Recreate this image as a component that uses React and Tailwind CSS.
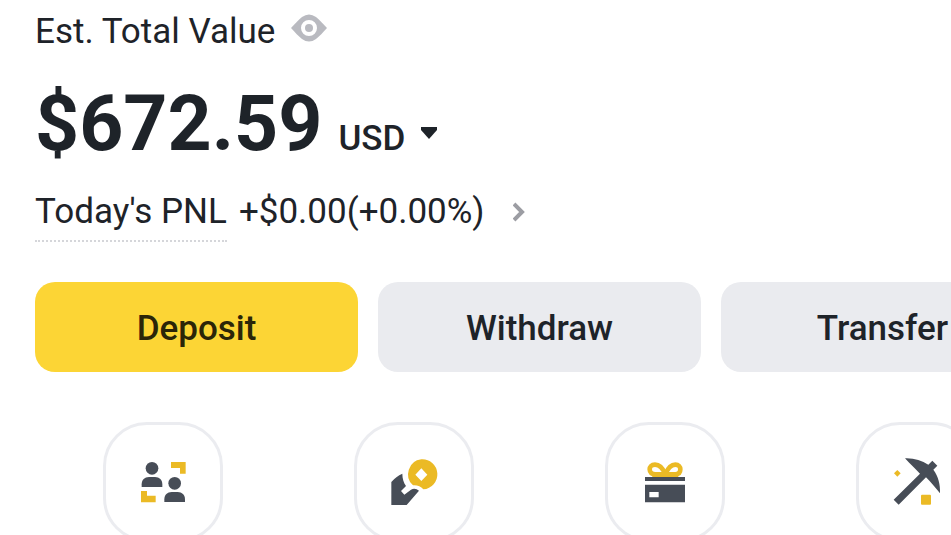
import React, { useState } from 'react';

const P2PIcon = () => (
  <svg viewBox="113 112 180 180" className="w-[60px] h-[60px]" aria-hidden="true">
    <g fill="#474d57">
      <circle cx="170" cy="161" r="19" />
      <path d="M139 217v-8c0-13 9-22 22-22h18c13 0 22 9 22 22v8z" />
      <circle cx="238" cy="206" r="19" />
      <path d="M207 262v-8c0-13 9-22 22-22h18c13 0 22 9 22 22v8z" />
    </g>
    <path fill="#ebba25" d="M227 142h44v35h-17v-17h-27zM137 229h18v14h26v20h-44z" />
  </svg>
);

const EarnIcon = () => (
  <svg viewBox="117 112 180 180" className="w-[60px] h-[60px]" aria-hidden="true">
    <path fill="#474d57" d="M139 202q14-17 33-25c0 14 4 27 11 37l-15 15 10 11 20-15c8-5 17-3 24 3l-37 43h-46z" />
    <path fill="#ebba25" fillRule="evenodd" d="M229 134a45 45 0 0 1 6 90c-8-9-18-13-31-12a45 45 0 0 1 25-78zM229 161l-18 19 18 19 18-19z" />
  </svg>
);

const GiftCardIcon = () => (
  <svg viewBox="120 112 180 180" className="w-[60px] h-[60px]" aria-hidden="true">
    <path
      fill="none"
      stroke="#ebba25"
      strokeWidth="14"
      strokeLinejoin="round"
      d="M211 179c-7-17-18-29-31-29-11 0-16 7-16 14 0 10 7 15 17 15h60c10 0 15-6 15-15 0-7-5-14-15-14-13 0-23 12-30 29z"
    />
    <path fill="#ebba25" d="M172 173h78v14h-78z" />
    <path fill="#474d57" fillRule="evenodd" d="M150 187h120v12H150zM150 210h120v53H150zM163 232v16h28v-16z" />
  </svg>
);

const MiningIcon = () => (
  <svg viewBox="123 112 180 180" className="w-[60px] h-[60px]" aria-hidden="true">
    <path fill="#474d57" d="M146 255l79-78c-14-14-29-29-45-46 27-1 50 6 70 19l12-12 15 15-12 12c15 20 21 44 20 71-14-17-27-34-42-48l-82 82z" />
    <path fill="#ebba25" d="M157 166l10 10-10 10-10-10z" />
    <rect x="228" y="240" width="30" height="30" rx="3" fill="#ebba25" />
  </svg>
);

const EyeIcon = () => (
  <svg viewBox="0 0 36 28" className="w-9 h-7" aria-hidden="true">
    <path
      fill="#b9bac0"
      fillRule="evenodd"
      d="M0 14C4 10 7 6 11 3Q18-2 25 3C29 6 32 10 36 14C32 18 29 22 25 25Q18 30 11 25C7 22 4 18 0 14zM18 6a8 8 0 1 0 0 16a8 8 0 1 0 0-16z"
    />
    <circle cx="18" cy="14" r="4" fill="#b9bac0" />
  </svg>
);

const actions = [
  { label: 'Deposit', style: 'bg-[#fcd535] text-[#2b2508]' },
  { label: 'Withdraw', style: 'bg-[#eaebef] text-[#1e2329]' },
  { label: 'Transfer', style: 'bg-[#eaebef] text-[#1e2329]' },
];

const shortcuts = [
  { name: 'P2P', icon: P2PIcon },
  { name: 'Earn', icon: EarnIcon },
  { name: 'Gift Card', icon: GiftCardIcon },
  { name: 'Mining', icon: MiningIcon },
];

export default function App() {
  const [hidden, setHidden] = useState(false);

  return (
    <main className="min-h-screen bg-white overflow-hidden font-[Roboto,sans-serif] text-[#1e2329]">
      <section className="pl-[35px] pt-2">
        <div className="flex items-center gap-4 h-12">
          <h1 className="text-[35px] leading-[48px]">Est. Total Value</h1>
          <button type="button" aria-label="Toggle balance" onClick={() => setHidden(!hidden)} className="mb-2">
            <EyeIcon />
          </button>
        </div>

        <div className="flex items-baseline gap-4 mt-5">
          <p className="text-[77px] leading-[96px] font-bold">{hidden ? '******' : '$672.59'}</p>
          <button type="button" className="flex items-center gap-4 text-[35px] leading-10 font-medium">
            USD
            <svg viewBox="0 0 16 12" className="w-4 h-3 mb-3" aria-hidden="true">
              <path fill="#1e2329" d="M0 0h16v3L8 12 0 3z" />
            </svg>
          </button>
        </div>

        <div className="flex items-start gap-3 mt-4 text-[35px] leading-[48px]">
          <span className="pb-1 border-b-2 border-dotted border-[#d5d6da]">Today's PNL</span>
          <a href="#pnl" className="flex items-center gap-7">
            {hidden ? '******' : '+$0.00(+0.00%)'}
            <svg viewBox="0 0 12 20" className="w-3 h-5" aria-hidden="true">
              <path fill="none" stroke="#9c9da3" strokeWidth="4" d="M1 2l8 8-8 8" />
            </svg>
          </a>
        </div>
      </section>

      {/* Main actions */}
      <div className="flex gap-5 pl-[35px] mt-10 overflow-x-auto [scrollbar-width:none]">
        {actions.map(a => (
          <button key={a.label} type="button"
            className={`w-[323px] h-[90px] pt-1 shrink-0 rounded-[20px] text-[35px] font-medium ${a.style}`}>
            {a.label}
          </button>
        ))}
      </div>

      {/* Shortcuts */}
      <nav className="flex pl-[37px] mt-[50px] overflow-x-auto [scrollbar-width:none]">
        {shortcuts.map(({ name, icon: Icon }) => (
          <div key={name} className="w-[251px] shrink-0 flex justify-center">
            <button type="button" aria-label={name}
              className="w-[120px] h-[120px] flex items-center justify-center rounded-[44px] border-3 border-[#ebecf0]">
              <Icon />
            </button>
          </div>
        ))}
      </nav>
    </main>
  );
}
